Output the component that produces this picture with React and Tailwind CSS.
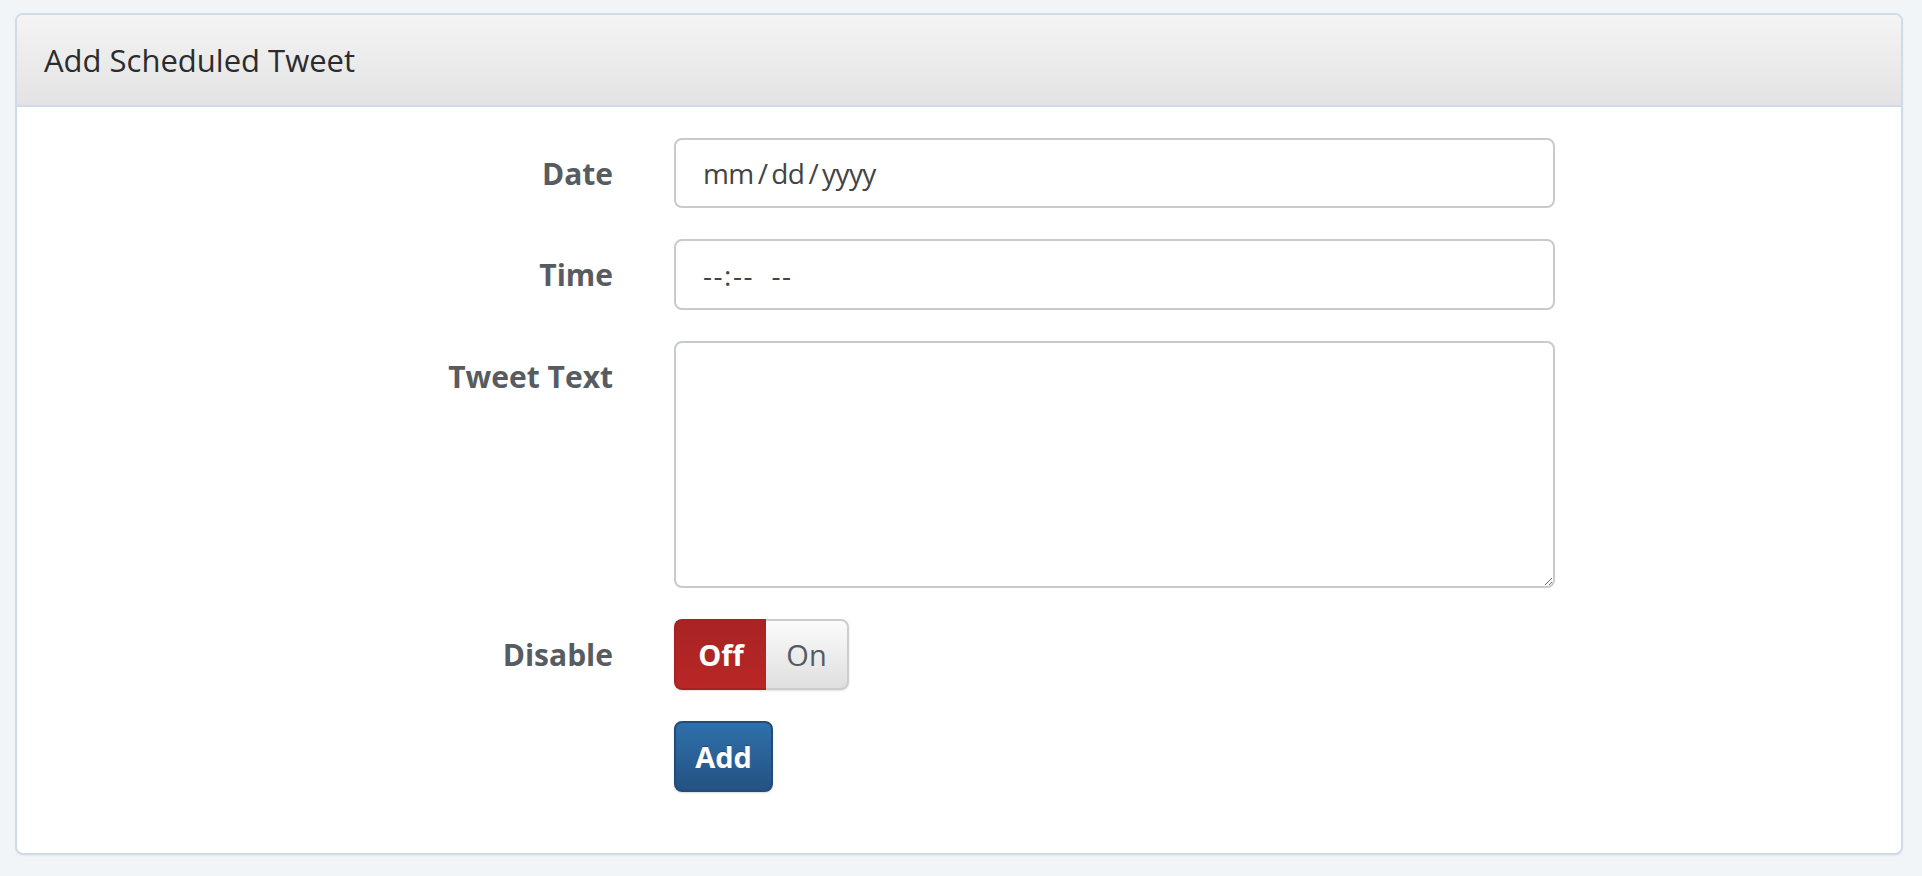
import React from "react";

const font = { fontFamily: '"Open Sans", "DejaVu Sans", sans-serif' };

function Row({ label, children }) {
  return (
    <div className="flex items-start">
      <div className="w-[596px] h-[70px] flex items-center justify-end text-[30px] font-bold text-[#575c61]">
        {label}
      </div>
      <div className="ml-[61px]">{children}</div>
    </div>
  );
}

export default function App() {
  return (
    <div
      className="min-h-[876px] bg-[#f2f5f8] pt-[13px] pl-[15px] pr-[19px] pb-[23px]"
      style={font}
    >
      <div className="border-2 border-[#cfdbe7] rounded-[8px] bg-white overflow-hidden shadow-[0_1px_2px_rgba(0,0,0,0.05)]">
        <div className="h-[92px] border-b-2 border-[#cfdbe7] bg-gradient-to-b from-[#f4f4f4] to-[#e3e3e3] flex items-center px-[27px]">
          <h1 className="text-[31px] font-normal text-[#2c2c2c]">
            Add Scheduled Tweet
          </h1>
        </div>
        <div className="pt-[31px] pb-[61px] flex flex-col gap-[31px]">
          <Row label="Date">
            <div className="w-[881px] h-[70px] border-2 border-[#c7cbcf] rounded-[8px] px-[27px] flex items-center text-[28px] text-[#444] tracking-[-0.6px]">
              mm<span className="mx-[4px]">/</span>dd<span className="mx-[4px]">/</span>yyyy
            </div>
          </Row>
          <Row label="Time">
            <div className="w-[881px] h-[71px] border-2 border-[#c7cbcf] rounded-[8px] px-[27px] flex items-center text-[28px] text-[#444] tracking-[1.5px]">
              --:--&nbsp;&nbsp;--
            </div>
          </Row>
          <Row label="Tweet Text">
            <textarea
              className="block w-[881px] h-[247px] border-2 border-[#c7cbcf] rounded-[8px] px-[27px] py-[12px] text-[28px] text-[#444] outline-none resize"
              style={font}
            />
          </Row>
          <Row label="Disable">
            <div className="flex h-[71px] rounded-[8px] shadow-[0_1px_2px_rgba(0,0,0,0.12)]">
              <button className="w-[92px] h-full rounded-l-[8px] bg-gradient-to-b from-[#a82323] to-[#b92626] border-2 border-r-0 border-[#a82222] text-white font-bold text-[29px] flex items-center justify-center">
                Off
              </button>
              <button className="w-[83px] h-full rounded-r-[8px] bg-gradient-to-b from-[#fbfbfb] to-[#dfdfdf] border-2 border-l-0 border-[#cccccc] text-[#555a5f] text-[29px] font-medium flex items-center justify-center">
                On
              </button>
            </div>
          </Row>
          <Row label="">
            <button className="w-[99px] h-[71px] rounded-[8px] bg-gradient-to-b from-[#2f70ab] to-[#245283] border-2 border-[#224c77] text-white font-bold text-[29px] flex items-center justify-center shadow-[0_1px_2px_rgba(0,0,0,0.15)] [text-shadow:0_-1px_0_rgba(0,0,0,0.25)]">
              Add
            </button>
          </Row>
        </div>
      </div>
    </div>
  );
}
